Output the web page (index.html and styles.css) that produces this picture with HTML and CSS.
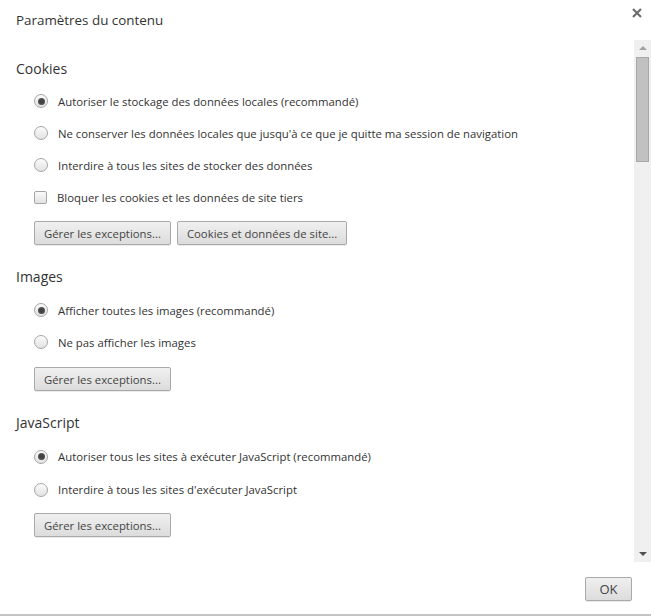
FILE: index.html
```html
<!DOCTYPE html>
<html lang="fr">
<head>
<meta charset="utf-8">
<title>Paramètres du contenu</title>
<link rel="stylesheet" href="styles.css">
</head>
<body>
<div class="dialog">
  <div class="header">
    <h1 class="title">Paramètres du contenu</h1>
    <button class="close" aria-label="Fermer">
      <svg width="10" height="10" viewBox="0 0 10 10"><path d="M1 1L9 9M9 1L1 9" stroke="#6e6e6e" stroke-width="2.2"/></svg>
    </button>
  </div>
  <div class="body">
    <div class="scroll">
      <section class="section">
        <h2 class="heading">Cookies</h2>
        <label class="row"><span class="radio checked"></span>Autoriser le stockage des données locales (recommandé)</label>
        <label class="row"><span class="radio"></span>Ne conserver les données locales que jusqu'à ce que je quitte ma session de navigation</label>
        <label class="row"><span class="radio"></span>Interdire à tous les sites de stocker des données</label>
        <label class="row"><span class="check"></span>Bloquer les cookies et les données de site tiers</label>
        <div class="buttons">
          <button class="btn">Gérer les exceptions...</button>
          <button class="btn">Cookies et données de site...</button>
        </div>
      </section>
      <section class="section images">
        <h2 class="heading">Images</h2>
        <label class="row"><span class="radio checked"></span>Afficher toutes les images (recommandé)</label>
        <label class="row"><span class="radio"></span>Ne pas afficher les images</label>
        <div class="buttons">
          <button class="btn">Gérer les exceptions...</button>
        </div>
      </section>
      <section class="section js">
        <h2 class="heading">JavaScript</h2>
        <label class="row"><span class="radio checked"></span>Autoriser tous les sites à exécuter JavaScript (recommandé)</label>
        <label class="row"><span class="radio"></span>Interdire à tous les sites d'exécuter JavaScript</label>
        <div class="buttons">
          <button class="btn">Gérer les exceptions...</button>
        </div>
      </section>
    </div>
    <div class="scrollbar">
      <div class="arrow up"></div>
      <div class="thumb"></div>
      <div class="track"></div>
      <div class="arrow down"></div>
    </div>
  </div>
  <div class="footer">
    <button class="btn ok">OK</button>
  </div>
</div>
</body>
</html>
```

FILE: styles.css
```css
* { box-sizing: border-box; }
html, body { margin: 0; padding: 0; background: #fff; }
body {
  font-family: "Open Sans", "Noto Sans", sans-serif;
  font-size: 11.35px;
  color: #333;
}
.dialog {
  width: 651px;
  height: 616px;
  display: flex;
  flex-direction: column;
  border-bottom: 2px solid #c4c4c4;
  overflow: hidden;
}
.header {
  height: 40px;
  display: flex;
  justify-content: space-between;
  align-items: flex-start;
  flex: none;
}
.title {
  margin: 0;
  padding: 10px 0 0 16px;
  font-size: 13.4px;
  font-weight: normal;
  line-height: 20px;
  color: #333;
}
.close {
  margin: 8px 9px 0 0;
  padding: 0;
  width: 10px;
  height: 10px;
  border: 0;
  background: none;
  display: flex;
}
.body {
  height: 522px;
  display: flex;
  flex: none;
}
.scroll {
  flex: 1;
  overflow: hidden;
  padding: 19px 0 0 16px;
}
.section { margin-bottom: 22px; }
.heading {
  margin: 0 0 6px;
  font-size: 14px;
  font-weight: normal;
  line-height: 20px;
  color: #333;
}
.images .heading, .js .heading { margin-bottom: 7px; }
.row {
  display: flex;
  align-items: center;
  height: 32px;
  padding-left: 18px;
  gap: 10px;
  white-space: nowrap;
}
.js .row { height: 33px; }
.js .buttons { margin-top: 7px; }
.images .buttons { margin-top: 9px; }
.radio, .check {
  flex: none;
  width: 14px;
  height: 14px;
  border: 1px solid #a6a6a6;
  background: linear-gradient(#fbfbfb, #e2e2e2);
  display: flex;
  align-items: center;
  justify-content: center;
}
.radio { border-radius: 50%; }
.check { border-radius: 2px; width: 13px; height: 13px; }
.radio.checked::after {
  content: "";
  width: 7px;
  height: 7px;
  border-radius: 50%;
  background: radial-gradient(#3c3c3c, #5a5a5a);
}
.buttons {
  display: flex;
  gap: 6px;
  padding-left: 18px;
  margin-top: 8px;
}
.btn {
  font-family: inherit;
  font-size: 11.35px;
  color: #444;
  height: 24px;
  padding: 0 9px;
  border: 1px solid #a9a9a9;
  border-radius: 2px;
  background: linear-gradient(#f0f0f0, #dcdcdc);
  box-shadow: 0 1px 0 rgba(0,0,0,0.08);
}
.scrollbar {
  width: 17px;
  flex: none;
  background: #f0f0f0;
  display: flex;
  flex-direction: column;
  align-items: center;
}
.arrow {
  width: 17px;
  height: 17px;
  flex: none;
  position: relative;
}
.arrow::after {
  content: "";
  position: absolute;
  left: 5px;
  border-left: 4px solid transparent;
  border-right: 4px solid transparent;
}
.arrow.up::after { top: 6px; border-bottom: 4px solid #a3a3a3; }
.arrow.down::after { top: 7px; border-top: 4px solid #505050; }
.thumb {
  width: 13px;
  height: 105px;
  flex: none;
  background: #c1c1c1;
  border: 1px solid #a8a8a8;
}
.track { flex: 1; }
.footer {
  flex: 1;
  display: flex;
  justify-content: flex-end;
  align-items: flex-start;
  padding: 15px 19px 0 0;
}
.btn.ok {
  width: 47px;
  font-size: 13px;
  padding: 0;
}
```
